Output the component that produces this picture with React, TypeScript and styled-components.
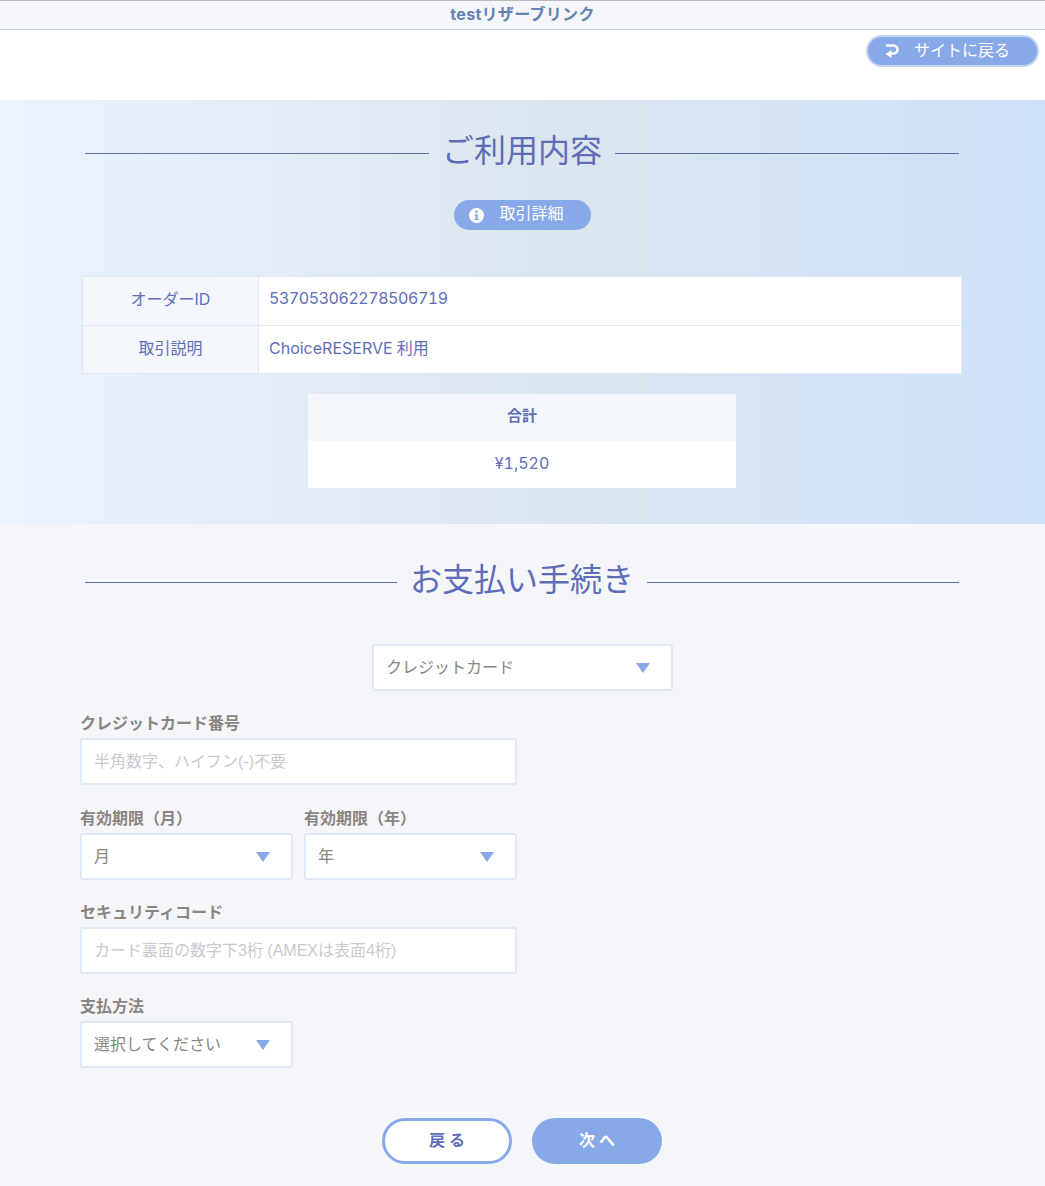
import React from "react";
import styled, { createGlobalStyle } from "styled-components";

const Global = createGlobalStyle`
  html, body { margin: 0; padding: 0; background: #f4f6fa; }
  * { box-sizing: border-box; }
  body { font-family: Inter, "Noto Sans CJK JP", "Noto Sans", sans-serif; font-size: 16px; font-variant-numeric: tabular-nums; }
`;
const Page = styled.div`width: 1045px; height: 1186px; overflow: hidden; background: #f4f6fa;`;
const Header = styled.header`
  height: 30px; background: #f4f6fa; border-top: 1px solid #bdbdbd; border-bottom: 1px solid #c8d5e9;
  display: flex; align-items: center; justify-content: center; padding-bottom: 2px;
  font-size: 16px; font-weight: 700; color: #6482b4; line-height: 24px; letter-spacing: 0.3px;
`;
const TopBar = styled.div`height: 70px; background: #fff; display: flex; justify-content: flex-end; padding: 5px 6px 0 0; align-items: flex-start;`;
const BackLink = styled.a`
  width: 173px; height: 32px; border-radius: 16px; background: #88a9e8; border: 2px solid #c3d3f1;
  color: #fff; display: flex; align-items: center; padding: 1px 0 0 17px; gap: 15px; font-size: 16px; line-height: 1;
`;
const LiftedText = styled.span`padding-bottom: 4px;`;
const Summary = styled.section`
  height: 424px; background: linear-gradient(90deg, #ebf4fe 0%, #dce6ef 50%, #cfe1f8 100%);
  padding: 29px 83px 0 82px; display: flex; flex-direction: column; align-items: center;
`;
const Heading = styled.div`
  width: 874px; display: flex; align-items: center; gap: 13px; height: 48px;
  color: #5f6db8; font-size: 32px; line-height: 48px; white-space: nowrap;
  &::before, &::after { content: ""; flex: 1; height: 1px; background: #5f6db8; }
`;
const HeadingText = styled.span`padding-bottom: 4px;`;
const DetailPill = styled.button`
  margin-top: 23px; width: 137px; height: 30px; border: 0; border-radius: 15px; background: #88a9e8; color: #fff;
  display: flex; align-items: center; padding: 0 0 0 15px; gap: 16px; font: inherit; font-size: 16px; line-height: 1;
`;
const InfoTable = styled.div`
  margin-top: 46px; width: 880px; border: 1px solid #dfe9f6; background: #fff;
  display: grid; grid-template-columns: 176px 1fr; color: #5f6db8;
`;
const KeyCell = styled.div<{ $last?: boolean }>`
  background: #f4f7fc; height: ${p => (p.$last ? 47 : 49)}px; display: flex; align-items: center; justify-content: center; padding-bottom: 6px;
  border-right: 1px solid #dfe9f6; ${p => (p.$last ? "" : "border-bottom: 1px solid #dfe9f6;")}
`;
const ValueCell = styled.div<{ $last?: boolean }>`
  height: ${p => (p.$last ? 47 : 49)}px; display: flex; align-items: center; padding: 0 0 6px 10px;
  ${p => (p.$last ? "" : "border-bottom: 1px solid #dfe9f6;")}
`;
const OrderId = styled.span`letter-spacing: -0.45px;`;
const TotalTable = styled.div`margin-top: 20px; width: 428px; color: #5f6db8; text-align: center;`;
const TotalHead = styled.div`height: 47px; line-height: 44px; background: #f4f7fc; font-weight: 700; font-size: 15px;`;
const TotalValue = styled.div`height: 47px; line-height: 44px; background: #fff;`;
const Payment = styled.section`padding: 34px 80px 0; background: #f4f6fa; height: 662px; display: flex; flex-direction: column;`;
const HeadingRow = styled.div`display: flex; padding-left: 5px;`;
const MethodRow = styled.div`display: flex; justify-content: center; margin-top: 38px;`;
const Form = styled.div`width: 437px; display: flex; flex-direction: column; margin-top: 20px;`;
const Label = styled.label`display: block; color: #8a8580; font-weight: 700; font-size: 16px; line-height: 24px; height: 24px; margin-bottom: 3px;`;
const Field = styled.div<{ $w?: number }>`width: ${p => (p.$w ? `${p.$w}px` : "100%")}; margin-bottom: 20px;`;
const FirstField = styled(Field)`margin-bottom: 21px;`;
const Row = styled.div`display: flex; gap: 11px;`;
const Box = styled.div<{ $w?: number }>`
  width: ${p => (p.$w ? `${p.$w}px` : "100%")}; height: 47px; background: #fff; border: 2px solid #dfe8f4; border-radius: 3px;
  display: flex; align-items: center; justify-content: space-between; padding: 0 21px 0 12px; color: #8a8580; font-size: 16px;
`;
const Placeholder = styled(LiftedText)`color: #c9c9ce; font-family: "Liberation Sans", "Noto Sans CJK JP", sans-serif;`;
const Arrow = styled.i`width: 0; height: 0; border-left: 7px solid transparent; border-right: 7px solid transparent; border-top: 10px solid #88a9e8;`;
const Buttons = styled.div`display: flex; justify-content: center; gap: 20px; margin-top: 30px; padding-right: 1px;`;
const Btn = styled.button<{ $primary?: boolean }>`
  width: 130px; height: 46px; border-radius: 23px; font: inherit; font-weight: 700; font-size: 16px; letter-spacing: 4px; line-height: 1; padding: 0 0 3px 4px;
  background: ${p => (p.$primary ? "#88a9e8" : "#fff")}; color: ${p => (p.$primary ? "#fff" : "#5f6db8")};
  border: ${p => (p.$primary ? "0" : "3px solid #88a9e8")};
`;

const ReturnIcon = () => (
  <svg width="14" height="15" viewBox="0 0 14 15" fill="none">
    <path d="M1 1.5H8.5a4 4 0 0 1 0 8H5" stroke="#fff" strokeWidth="2.4" />
    <path d="M6.5 6V14L0.5 10Z" fill="#fff" />
  </svg>
);
const InfoIcon = () => (
  <svg width="15" height="15" viewBox="0 0 15 15">
    <circle cx="7.5" cy="7.5" r="7.5" fill="#fff" />
    <circle cx="7.5" cy="3.8" r="1.4" fill="#88a9e8" />
    <path d="M5.6 6.2H8.8V10.8H9.8V12H5.4V10.8H6.4V7.4H5.6Z" fill="#88a9e8" />
  </svg>
);

export default function App() {
  return (
    <Page>
      <Global />
      <Header>testリザーブリンク</Header>
      <TopBar><BackLink><ReturnIcon /><LiftedText>サイトに戻る</LiftedText></BackLink></TopBar>
      <Summary>
        <Heading><HeadingText>ご利用内容</HeadingText></Heading>
        <DetailPill><InfoIcon /><LiftedText>取引詳細</LiftedText></DetailPill>
        <InfoTable>
          <KeyCell>オーダーID</KeyCell>
          <ValueCell><OrderId>537053062278506719</OrderId></ValueCell>
          <KeyCell $last>取引説明</KeyCell>
          <ValueCell $last>ChoiceRESERVE 利用</ValueCell>
        </InfoTable>
        <TotalTable>
          <TotalHead>合計</TotalHead>
          <TotalValue>¥1,520</TotalValue>
        </TotalTable>
      </Summary>
      <Payment>
        <HeadingRow><Heading><HeadingText>お支払い手続き</HeadingText></Heading></HeadingRow>
        <MethodRow><Box $w={301}><LiftedText>クレジットカード</LiftedText><Arrow /></Box></MethodRow>
        <Form>
          <FirstField>
            <Label>クレジットカード番号</Label>
            <Box><Placeholder>半角数字、ハイフン(-)不要</Placeholder></Box>
          </FirstField>
          <Row>
            <Field $w={213}>
              <Label>有効期限（月）</Label>
              <Box><LiftedText>月</LiftedText><Arrow /></Box>
            </Field>
            <Field $w={213}>
              <Label>有効期限（年）</Label>
              <Box><LiftedText>年</LiftedText><Arrow /></Box>
            </Field>
          </Row>
          <Field>
            <Label>セキュリティコード</Label>
            <Box><Placeholder>カード裏面の数字下3桁 (AMEXは表面4桁)</Placeholder></Box>
          </Field>
          <Field $w={213}>
            <Label>支払方法</Label>
            <Box><LiftedText>選択してください</LiftedText><Arrow /></Box>
          </Field>
        </Form>
        <Buttons>
          <Btn>戻る</Btn>
          <Btn $primary>次へ</Btn>
        </Buttons>
      </Payment>
    </Page>
  );
}
